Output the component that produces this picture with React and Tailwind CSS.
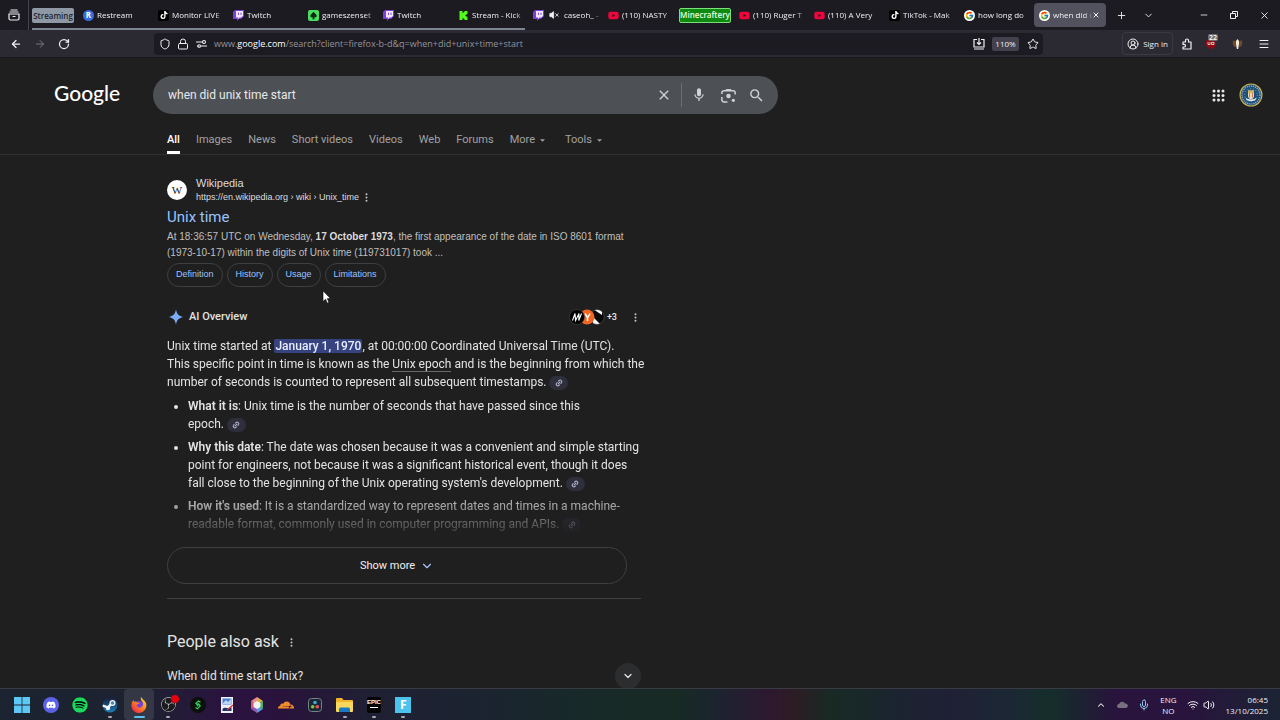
import React from "react";
import { FaTiktok, FaYoutube, FaDiscord, FaSpotify } from "react-icons/fa";
import { SiKick, SiCloudflare, SiObsstudio } from "react-icons/si";
import { FcGoogle } from "react-icons/fc";
import { MdMic, MdSearch, MdClose } from "react-icons/md";
import {
  ArrowLeft, ArrowRight, RotateCw, Shield, Lock, Star, Menu, X, Plus, ChevronDown,
  ChevronUp, Minus, CircleUserRound, Wifi, Volume2, Mic, VolumeX, Link2,
} from "lucide-react";

const chromeFont = "font-['Open_Sans','Noto_Sans',sans-serif]";
const pageFont = "font-[Roboto,'Liberation_Sans',sans-serif]";
const arial = "font-['Liberation_Sans',Arial,sans-serif]";

function TwitchMark() {
  return (
    <svg viewBox="0 0 11 11" className="size-[11px] shrink-0">
      <path d="M2 0h9v6L8 9H6l-2 2V9H0V2z" fill="#7c3fd6" />
      <path d="M3 1h7v5L8.300 7.500H6.500L5 9V7.500H3z" fill="#f0e6ff" />
      <path d="M5.500 2.700v2.300M8 2.700v2.300" stroke="#7c3fd6" strokeWidth="0.900" />
    </svg>
  );
}

function RestreamMark() {
  return (
    <span className="flex size-[11px] shrink-0 items-center justify-center rounded-full bg-[#3a6de0] text-[8px] font-bold leading-none text-white">
      R
    </span>
  );
}

function TiktokMark() {
  return (
    <span className="flex size-[11px] shrink-0 items-center justify-center rounded-xs bg-black text-white">
      <FaTiktok size={8} />
    </span>
  );
}

function SpadeMark() {
  return (
    <svg viewBox="0 0 11 11" className="size-[11px] shrink-0">
      <rect width="11" height="11" rx="2" fill="#4ade60" />
      <path d="M5.500 1.800 8.500 5a1.700 1.700 0 0 1-2.500 2.200l.7 2H4.300l.7-2A1.700 1.700 0 0 1 2.500 5z" fill="#0b2a10" />
    </svg>
  );
}

function GoogleMark() {
  return (
    <span className="flex size-[11px] shrink-0 items-center justify-center rounded-full bg-white">
      <FcGoogle size={9} />
    </span>
  );
}

const YoutubeMark = () => <FaYoutube size={11} className="shrink-0 text-[#f0043c]" />;
const KickMark = () => <SiKick size={9} className="mx-px shrink-0 text-[#53fc18]" />;

const streamTabs = [
  { icon: RestreamMark, title: "Restream" },
  { icon: TiktokMark, title: "Monitor LIVE" },
  { icon: TwitchMark, title: "Twitch" },
  { icon: SpadeMark, title: "gameszenset" },
  { icon: TwitchMark, title: "Twitch" },
  { icon: KickMark, title: "Stream - Kick" },
];
const looseTabs = [
  { icon: TwitchMark, title: "caseoh_ -", muted: true },
  { icon: YoutubeMark, title: "(110) NASTY" },
];
const rightTabs = [
  { icon: YoutubeMark, title: "(110) Ruger T" },
  { icon: YoutubeMark, title: "(110) A Very" },
  { icon: TiktokMark, title: "TikTok - Mak" },
  { icon: GoogleMark, title: "how long do" },
  { icon: GoogleMark, title: "when did u", active: true },
];

function Tab({ icon: Icon, title, muted, active }) {
  return (
    <div
      className={
        active
          ? "flex h-6 w-[72px] shrink-0 items-center rounded-sm bg-[#52525e] pl-[5px] pr-[6px]"
          : "flex h-6 w-[72px] shrink-0 items-center pl-[5px]"
      }
    >
      <button type="button" role="tab" aria-selected={!!active} className="flex min-w-0 flex-1 items-center gap-[3px]">
        <Icon />
        {muted && <VolumeX size={10} className="mx-[2px] shrink-0" fill="currentColor" />}
        <span className="min-w-0 flex-1 whitespace-nowrap text-left [mask-image:linear-gradient(to_right,black_80%,transparent_105%)]">
          {title}
        </span>
      </button>
      {active && (
        <button type="button" aria-label="Close tab" className="shrink-0">
          <X size={8} strokeWidth={3} />
        </button>
      )}
    </div>
  );
}

function TabStrip() {
  return (
    <div className={`flex h-[30px] shrink-0 items-center bg-[#1c1b22] text-[8px] text-[#f0f0f4] ${chromeFont}`}>
      <button type="button" aria-label="Recent browsing" className="flex h-full w-[29px] shrink-0 items-center justify-center border-r border-[#44434c]">
        <svg viewBox="0 0 12 12" className="size-3" fill="none" stroke="currentColor" strokeWidth="1.200">
          <path d="M2.500 1h7M1.500 3h9M1 5h10v4.500a1.500 1.500 0 0 1-1.500 1.500h-7A1.500 1.500 0 0 1 1 9.500zM4.500 7.500h3" />
        </svg>
      </button>
      <div className="ml-[3px] flex h-full items-center gap-[3px] border-b-2 border-[#7d8591] pt-[2px]">
        <button type="button" className="mr-px h-[15px] w-[42px] rounded-xs bg-[#8f99a6] text-center font-semibold leading-[13px] text-[#22242c]">
          Streaming
        </button>
        {streamTabs.map((t, i) => <Tab key={i} {...t} />)}
      </div>
      <div className="ml-[3px] flex items-center gap-[3px]">
        {looseTabs.map((t, i) => <Tab key={i} {...t} />)}
        <button type="button" className="ml-px h-[15px] w-[52px] rounded-xs border border-[#7be07b] bg-[#0f8a10] text-center font-semibold leading-[12px] text-[#e4ffe0]">
          Minecraftery
        </button>
        {rightTabs.map((t, i) => <Tab key={i} {...t} />)}
      </div>
      <button type="button" aria-label="New tab" className="ml-[10px]"><Plus size={11} /></button>
      <button type="button" aria-label="List all tabs" className="ml-4"><ChevronDown size={11} /></button>
      <div className="ml-auto flex items-center gap-5 pr-[10px]">
        <button type="button" aria-label="Minimize"><Minus size={10} /></button>
        <button type="button" aria-label="Restore">
          <svg viewBox="0 0 10 10" className="size-[10px]" fill="none" stroke="currentColor">
            <path d="M1.500 3.500h5v5h-5zM3.500 3V1.500h5v5H7" />
          </svg>
        </button>
        <button type="button" aria-label="Close"><X size={11} /></button>
      </div>
    </div>
  );
}

function Toolbar() {
  return (
    <div className={`flex h-[28px] shrink-0 items-center border-b border-[#18181b] bg-[#2b2a33] text-[9px] text-[#f0f0f4] ${chromeFont}`}>
      <div className="flex w-[154px] shrink-0 items-center gap-[12px] pl-[10px]">
        <button type="button" aria-label="Back"><ArrowLeft size={12} strokeWidth={2.5} /></button>
        <button type="button" aria-label="Forward" className="text-[#77767f]"><ArrowRight size={12} /></button>
        <button type="button" aria-label="Reload"><RotateCw size={12} strokeWidth={2.5} /></button>
      </div>
      <div className="flex h-[22px] min-w-0 flex-1 items-center rounded-sm bg-[#1c1b22] pl-[5px] pr-1">
        <Shield size={12} className="shrink-0" />
        <Lock size={12} className="ml-[6px] shrink-0" />
        <svg viewBox="0 0 11 10" className="ml-[7px] h-[10px] w-[11px] shrink-0" fill="none" stroke="currentColor" strokeWidth="1.100">
          <path d="M0 3h6M5 7h6M1 7h1" />
          <circle cx="8" cy="3" r="1.500" />
          <circle cx="3.200" cy="7" r="1.300" />
        </svg>
        <div className="ml-[7px] flex-1 whitespace-nowrap text-[#94939c]">
          www.<span className="text-white">google.com</span>/search?client=firefox-b-d&amp;q=when+did+unix+time+start
        </div>
        <svg viewBox="0 0 12 12" className="size-3 shrink-0" fill="none" stroke="currentColor" strokeWidth="1.200">
          <path d="M4 1.500H1V9h10V1.500H8M6 0v6M4 4.500l2 2 2-2M1 11h10" />
        </svg>
        <button type="button" className="ml-[7px] h-[14px] w-[27px] rounded-xs bg-[#42414d] text-center text-[8px] leading-[14px]">110%</button>
        <button type="button" aria-label="Bookmark" className="ml-2"><Star size={12} /></button>
      </div>
      <div className="flex w-[237px] shrink-0 items-center">
        <button type="button" className="ml-[79px] flex h-[23px] w-[51px] items-center justify-center gap-1 rounded-sm border border-[#3b3a44] text-[8px] font-medium">
          <CircleUserRound size={12} className="shrink-0" />
          <span className="whitespace-nowrap">Sign in</span>
        </button>
        <button type="button" aria-label="Extensions" className="ml-2">
          <svg viewBox="0 0 12 12" className="size-3" fill="none" stroke="currentColor" strokeWidth="1.200" strokeLinejoin="round">
            <path d="M2 4h2.500V2.500a1.500 1.500 0 0 1 3 0V4H10v7H2V9h1.200a1.300 1.300 0 0 0 0-2.600H2z" />
          </svg>
        </button>
        <button type="button" aria-label="Content blocker" className="relative ml-[13px]">
          <svg viewBox="0 0 10 11" className="h-[11px] w-[10px]">
            <path d="M5 0l5 2v4c0 3-3 4.500-5 5-2-.5-5-2-5-5V2z" fill="#8c0c14" />
            <path d="M2 4v2.500h2V4M5.500 4.500h2.500v2H5.500z" fill="none" stroke="#fff" strokeWidth=".7" />
          </svg>
          <span className="absolute -top-[4px] left-[2px] rounded-xs bg-[#6c7074] px-px text-[7px] font-semibold leading-[7px] text-white">22</span>
        </button>
        <button type="button" aria-label="Extension" className="ml-4">
          <svg viewBox="0 0 11 10" className="h-[10px] w-[11px]">
            <path d="M1 2c2-1 3 0 3 2v4C2 8 0 6 1 2zM10 2C8 1 7 2 7 4v4c2 0 4-2 3-6z" fill="#6e4a2a" />
            <path d="M4 2l1.500-2L7 2v3l-.8 5H4.800L4 5z" fill="#f3ead8" />
          </svg>
        </button>
        <button type="button" aria-label="Menu" className="ml-[15px]"><Menu size={12} /></button>
      </div>
    </div>
  );
}

const Dots = ({ label }) => (
  <button type="button" aria-label={label} className="flex h-3 w-2 items-center justify-center text-[#c4c4c4]">
    <svg viewBox="0 0 3 9" className="h-[9px] w-[3px]" fill="currentColor">
      <circle cx="1.500" cy="1.200" r="1" /><circle cx="1.500" cy="4.500" r="1" /><circle cx="1.500" cy="7.800" r="1" />
    </svg>
  </button>
);

function SealAvatar() {
  return (
    <svg viewBox="0 0 24 24" className="size-6">
      <circle cx="12" cy="12" r="11.500" fill="#c9b458" />
      <circle cx="12" cy="12" r="10.400" fill="#23527c" />
      <circle cx="12" cy="12" r="9" fill="none" stroke="#9db4bd" strokeWidth="1.200" strokeDasharray="1.200 .9" />
      <circle cx="12" cy="12" r="7.600" fill="#1b4f78" />
      <circle cx="12" cy="12" r="6.300" fill="none" stroke="#7fa7a8" strokeDasharray="1 1.800" />
      <path d="M9 7.500h6V13c0 2-1.500 3-3 3.500-1.500-.5-3-1.500-3-3.500z" fill="#e8d9b8" />
      <path d="M9 7.500h6v2.500H9z" fill="#d8b25a" />
      <path d="M10.500 10v4.500M13.500 10v4.500" stroke="#cf6a4a" strokeWidth=".9" />
      <path d="M6.500 14.500c2 2.500 9 2.500 11 0l-1 2.500c-2 1.500-7 1.500-9 0z" fill="#e4edf0" />
    </svg>
  );
}

function SearchHeader() {
  return (
    <header className="flex items-center pt-[18px]">
      <a href="#" className="ml-[54px] w-[99px] shrink-0 pb-[5px] font-[Lato,sans-serif] text-[21px] font-medium leading-6 text-white">Google</a>
      <form className="flex h-[38px] w-[625px] items-center rounded-full bg-[#4d5156] pl-[15px] pr-[13px] text-[#d0d3d6]">
        <input
          aria-label="Search"
          defaultValue="when did unix time start"
          className="min-w-0 flex-1 bg-transparent text-[12px] text-[#e8e8e8] outline-none"
        />
        <button type="button" aria-label="Clear" className="mr-[9px]"><MdClose size={16} /></button>
        <span className="h-6 w-px bg-[#6b6f74]" />
        <button type="button" aria-label="Search by voice" className="ml-[9px]"><MdMic size={16} /></button>
        <button type="button" aria-label="Search by image" className="ml-[14px]">
          <svg viewBox="0 0 14 14" className="size-[15px]" fill="none" stroke="currentColor" strokeWidth="1.400">
            <path d="M.8 5.500V4.500a2 2 0 0 1 2-2h8.400a2 2 0 0 1 2 2v1.500M.8 8.500v2.500a2 2 0 0 0 2 2H6" />
            <path d="M4.500 2.500V1h5v1.500z" fill="currentColor" stroke="none" />
            <circle cx="7" cy="7.500" r="2.100" fill="currentColor" stroke="none" />
            <circle cx="11.500" cy="11.500" r="1.500" fill="currentColor" stroke="none" />
          </svg>
        </button>
        <button type="submit" aria-label="Search" className="ml-3"><MdSearch size={17} /></button>
      </form>
      <div className="ml-auto flex items-center gap-[14px] pr-[17px]">
        <button type="button" aria-label="Google apps">
          <svg viewBox="0 0 13 13" className="size-[13px]" fill="#e8e8e8">
            {[2, 6.5, 11].map((y) => [2, 6.5, 11].map((x) => <circle key={`${x}-${y}`} cx={x} cy={y} r="1.500" />))}
          </svg>
        </button>
        <button type="button" aria-label="Account"><SealAvatar /></button>
      </div>
    </header>
  );
}

const filters = ["All", "Images", "News", "Short videos", "Videos", "Web", "Forums"];

function FilterNav() {
  return (
    <nav className="flex h-[41px] items-end gap-4 border-b border-[#303133] pl-[167px] text-[11px] leading-4 text-[#a2a2a2]">
      {filters.map((f, i) => (
        <a
          key={f}
          href="#"
          className={i === 0 ? "border-b-3 border-white pb-[3px] font-medium text-white" : "border-b-3 border-transparent pb-[3px]"}
        >
          {f}
        </a>
      ))}
      {["More", "Tools"].map((f) => (
        <button key={f} type="button" className="mr-1 flex items-center gap-[5px] border-b-3 border-transparent pb-[3px]">
          {f}
          <svg viewBox="0 0 6 3" className="h-[3px] w-[5px]" fill="currentColor"><path d="M0 0h6L3 3z" /></svg>
        </button>
      ))}
    </nav>
  );
}

const LinkPill = () => (
  <button type="button" aria-label="Sources" className="inline-flex h-[14px] w-[19px] items-center justify-center rounded-full bg-[#2e2e3c] align-middle text-[#b9bbd0]">
    <Link2 size={8} strokeWidth={3} className="-rotate-45" />
  </button>
);

function WikiResult() {
  return (
    <article className={arial}>
      <div className="flex items-center">
        <span className="flex size-5 items-center justify-center rounded-full bg-white font-['Liberation_Serif',serif] text-[11px] leading-none text-[#222]">W</span>
        <div className="ml-[9px] text-[#dadce0]">
          <div className="text-[11px] leading-[14px]">Wikipedia</div>
          <div className="flex items-center gap-[3px] text-[9px] leading-[14px]">
            <span>https://en.wikipedia.org › wiki › Unix_time</span>
            <Dots label="About this result" />
          </div>
        </div>
      </div>
      <h3 className={`mt-[3px] text-[15px] leading-5 text-[#99c3ff] ${pageFont}`}><a href="#">Unix time</a></h3>
      <p className="mt-[2px] whitespace-nowrap text-[10px] leading-4 text-[#bfbfbf]">
        At 18:36:57 UTC on Wednesday, <b className="text-[#dcdcdc]">17 October 1973</b>, the first appearance of the date in ISO 8601 format<br />
        (1973-10-17) within the digits of Unix time (119731017) took ...
      </p>
      <div className="mt-[2px] flex gap-1 text-[9px] text-[#99c3ff]">
        {["Definition", "History", "Usage", "Limitations"].map((c) => (
          <a key={c} href="#" className="flex h-6 items-center rounded-full border border-[#3c4043] px-2">{c}</a>
        ))}
      </div>
    </article>
  );
}

function SourceBadges() {
  return (
    <div className="flex items-center gap-[2px] text-[9px] font-medium text-[#e8e8e8]">
      <svg viewBox="0 0 36 16" className="h-4 w-9">
        <clipPath id="stripe"><circle cx="28" cy="8" r="7.300" /></clipPath>
        <g clipPath="url(#stripe)">
          <path d="M20 0h16v16H20z" fill="#0a0a0a" />
          <path d="M24 0h9v6zM24 8l8 8h-8z" fill="#fff" />
          <path d="M33 0v11l3 3V0z" fill="#0a0a0a" />
        </g>
        <circle cx="28" cy="8" r="7.300" fill="none" stroke="#6a6a6a" strokeWidth=".5" />
        <circle cx="18" cy="8" r="7.500" fill="#f26522" />
        <path d="M16 4.500l2.500 4v3.500M21 4.500l-2.500 4.500" fill="none" stroke="#fff" strokeWidth="1.500" />
        <circle cx="8" cy="8" r="7.500" fill="#000" stroke="#4a4a4a" strokeWidth=".6" />
        <path d="M3.500 11.500 6 4.500l.6 7L10 4.500l-.2 7L12.500 4.500" fill="none" stroke="#fff" strokeWidth="1.100" />
      </svg>
      <span>+3</span>
    </div>
  );
}

function AiOverview() {
  return (
    <section className="mt-5 text-[12px] leading-[18px] text-[#e3e3e3]">
      <div className="flex h-5 items-center">
        <svg viewBox="0 0 16 16" className="ml-px size-4"><path d="M8 .5C8.800 5 11 7.200 15.500 8 11 8.800 8.800 11 8 15.500 7.200 11 5 8.800.5 8 5 7.200 7.200 5 8 .5z" fill="#7cacf8" /></svg>
        <h2 className="ml-[5px] text-[11px] font-medium">AI Overview</h2>
        <div className="ml-auto flex items-center gap-[14px] pr-[2px]">
          <SourceBadges />
          <Dots label="More options" />
        </div>
      </div>
      <div className="-mr-5 whitespace-nowrap [mask-image:linear-gradient(to_bottom,black_78%,transparent_104%)]">
        <p className="mt-[10px]">
          Unix time started at <mark className="rounded-xs bg-[#36437f] px-px font-medium text-[#e8ecff]">January 1, 1970</mark>, at 00:00:00 Coordinated Universal Time (UTC).<br />
          This specific point in time is known as the <a href="#" className="border-b border-[#6a6a6a]">Unix epoch</a> and is the beginning from which the<br />
          number of seconds is counted to represent all subsequent timestamps. <LinkPill />
        </p>
        <ul className="mt-[6px] flex list-disc flex-col gap-[5px] pl-[21px]">
          <li>
            <b className="font-semibold">What it is</b>: Unix time is the number of seconds that have passed since this<br />
            epoch. <LinkPill />
          </li>
          <li>
            <b className="font-semibold">Why this date</b>: The date was chosen because it was a convenient and simple starting<br />
            point for engineers, not because it was a significant historical event, though it does<br />
            fall close to the beginning of the Unix operating system's development. <LinkPill />
          </li>
          <li>
            <b className="font-semibold">How it's used</b>: It is a standardized way to represent dates and times in a machine-<br />
            readable format, commonly used in computer programming and APIs. <LinkPill />
          </li>
        </ul>
      </div>
      <button type="button" className="mt-[14px] flex h-[37px] w-[460px] items-center justify-center gap-[5px] rounded-full border border-[#3c4043] text-[11px] text-[#f0f0f0]">
        Show more <ChevronDown size={14} className="text-[#a8c7fa]" />
      </button>
    </section>
  );
}

function PeopleAlsoAsk() {
  return (
    <section className="mt-[14px] border-t border-[#3c4043] pt-[31px] text-[#e3e3e3]">
      <div className="flex items-center gap-[9px]">
        <h2 className="text-[16px] leading-6">People also ask</h2>
        <Dots label="About this section" />
      </div>
      <div className="mt-[9px] flex items-center justify-between text-[12px]">
        <span>When did time start Unix?</span>
        <button type="button" aria-label="Expand" className="flex size-[26px] items-center justify-center rounded-full bg-[#2c2d2f]">
          <ChevronDown size={12} strokeWidth={2.5} />
        </button>
      </div>
    </section>
  );
}

const taskIcons = [
  { name: "Start", el: (
    <svg viewBox="0 0 16 16" className="size-4" fill="#5cc8f5"><path d="M0 0h7.600v7.600H0zM8.400 0H16v7.600H8.400zM0 8.400h7.600V16H0zM8.400 8.400H16V16H8.400z" /></svg>
  ) },
  { name: "Discord", el: <span className="flex size-4 items-center justify-center rounded-full bg-[#5b62e8] text-white"><FaDiscord size={10} /></span> },
  { name: "Spotify", el: <span className="rounded-full bg-black text-[#1ed760]"><FaSpotify size={16} /></span> },
  { name: "Steam", dot: true, el: (
    <svg viewBox="0 0 16 16" className="size-4">
      <defs><linearGradient id="steam" x1="0" y1="0" x2="0" y2="1"><stop offset="0" stopColor="#16203a" /><stop offset="1" stopColor="#1f7db8" /></linearGradient></defs>
      <circle cx="8" cy="8" r="7.500" fill="url(#steam)" />
      <path d="M.8 8.500 6 10.500l3-3.500" fill="none" stroke="#f2f6fa" strokeWidth="2.400" />
      <circle cx="6" cy="11" r="2.200" fill="#f2f6fa" />
      <circle cx="10.500" cy="6" r="2.400" fill="#4a86b0" stroke="#f2f6fa" strokeWidth="1.300" />
    </svg>
  ) },
  { name: "Firefox", active: true, el: (
    <svg viewBox="0 0 16 16" className="size-4">
      <defs><linearGradient id="fx" x1="1" y1="0" x2=".2" y2="1"><stop offset="0" stopColor="#ffe34a" /><stop offset=".5" stopColor="#ff8a1f" /><stop offset="1" stopColor="#f0264d" /></linearGradient></defs>
      <circle cx="8" cy="9" r="5" fill="#7540d8" />
      <path d="M10 0c1 2 3.500 3 5 6 1.500 5-2 10-7 10S-.5 11.500.7 6.500C1 5 1.500 4 2.500 3l.5 2c1.500-1 3 0 3.500.8 1-.2 2 .3 2.500.7-1.500 0-2 1-3.500 1.200.5 2 2 3.300 4 2.800 3-1 3-4 2-5.500C10 4 9.500 1.500 10 0z" fill="url(#fx)" />
    </svg>
  ) },
  { name: "OBS Studio", dot: true, el: (
    <span className="relative"><SiObsstudio size={15} className="rounded-full bg-[#1b1b1f] text-[#c9c9cf]" /><span className="absolute -right-[3px] -top-[2px] size-2 rounded-full bg-[#e3000f]" /></span>
  ) },
  { name: "Streaming app", el: (
    <svg viewBox="0 0 16 16" className="size-4"><circle cx="8" cy="8" r="8" fill="#0c0f0d" /><path d="M10.500 5.200 8.500 4 6 6.200l4.200 2.600L7.500 11.800 5.500 10.500M6 6.200 8 9.500M8.200 6.500l2 2.300" fill="none" stroke="#2fd158" strokeWidth="1.200" /></svg>
  ) },
  { name: "Paint", el: (
    <svg viewBox="0 0 14 16" className="h-4 w-[14px]"><path d="M1 0h12v16H1z" fill="#eef2f8" /><path d="M2.500 1.500h9v6h-9z" fill="#4a7fd0" /><path d="M3 6l3-3 2 2 3-3v5H3z" fill="#bcd6f5" /><path d="M2.500 12c3-3 6 1 9-2v4h-9z" fill="#22355e" /><path d="M13 8l-6 5" stroke="#d33" strokeWidth="1.200" /></svg>
  ) },
  { name: "Color picker", el: (
    <svg viewBox="0 0 16 16" className="size-4"><path d="M8 0l6 4-6 4z" fill="#d9b23c" /><path d="M14 4v8L8 8z" fill="#4caf6a" /><path d="M14 12l-6 4V8z" fill="#54a0d8" /><path d="M8 16l-6-4 6-4z" fill="#8e5bb5" /><path d="M2 12V4l6 4z" fill="#d65a78" /><path d="M2 4l6-4v8z" fill="#e88d8d" /><path d="M8 4l3.500 2v4L8 12l-3.500-2V6z" fill="#f2f2ee" /></svg>
  ) },
  { name: "Cloudflare", el: <SiCloudflare size={16} className="text-[#f08a2c]" /> },
  { name: "DaVinci Resolve", el: (
    <svg viewBox="0 0 14 14" className="size-[14px]"><rect x=".5" y=".5" width="13" height="13" rx="3" fill="#1b2630" stroke="#76828c" /><circle cx="7" cy="4.500" r="1.800" fill="#4aa3d8" /><circle cx="4.700" cy="8.700" r="1.800" fill="#7ac943" /><circle cx="9.300" cy="8.700" r="1.800" fill="#e8506a" /></svg>
  ) },
  { name: "File Explorer", dot: true, el: (
    <svg viewBox="0 0 17 16" className="h-4 w-[17px]"><path d="M0 2a1 1 0 0 1 1-1h5l1.500 2H16a1 1 0 0 1 1 1v10H0z" fill="#f5b52a" /><path d="M0 5h17v9a1 1 0 0 1-1 1H1a1 1 0 0 1-1-1z" fill="#fbd75b" /><path d="M3 15v-3a1.500 1.500 0 0 1 1.500-1.500h8A1.500 1.500 0 0 1 14 12v3z" fill="#1a78c8" /></svg>
  ) },
  { name: "Epic Games", dot: true, el: (
    <span className="flex h-4 w-[14px] flex-col items-center rounded-xs bg-[#050505] pt-[2px] font-['Liberation_Sans_Narrow','Liberation_Sans',sans-serif] text-[6px] font-bold leading-[7px] text-white">EPIC<span className="mt-px h-px w-2 bg-white" /></span>
  ) },
  { name: "Fortnite", dot: true, el: (
    <span className="flex size-4 items-center justify-center bg-[#4cc3ee] text-[12px] font-bold leading-none text-white">F</span>
  ) },
];

function Taskbar() {
  return (
    <footer className={`flex h-8 shrink-0 items-center border-t border-[#3a3a42] bg-[linear-gradient(to_right,#1b2430,#1d2230_11%,#2b1240_18%,#29133c_22%,#1f2033_29%,#1b2430_38%,#172a28_46%,#182a24_53%,#1c2430_56%,#2d1830_60%,#2d1c24_62%,#182a24_65%,#1b2430_70%,#202035_74%,#1b2834_79%,#152e2a_82%,#1b2430_84%,#28143c_87%,#28143c_93%,#1b2434)] text-[8px] leading-[11px] text-[#f0f0f4] ${chromeFont}`}>
      <div className="ml-[7px] grid h-full w-[411px] grid-cols-14">
        {taskIcons.map(({ name, el, dot, active }) => (
          <button
            key={name}
            type="button"
            aria-label={name}
            className={active ? "relative flex items-center justify-center rounded-sm bg-white/10" : "relative flex items-center justify-center"}
          >
            {el}
            {dot && <span className="absolute bottom-[2px] h-[2px] w-1 rounded-full bg-[#a8a8b2]" />}
            {active && <span className="absolute bottom-[2px] h-[2px] w-[11px] rounded-full bg-[#5cc0ee]" />}
          </button>
        ))}
      </div>
      <div className="ml-auto flex items-center pr-3">
        <ChevronUp size={10} strokeWidth={2.5} />
        <svg viewBox="0 0 11 7" className="ml-[11px] h-[7px] w-[11px]" fill="#77707f"><path d="M2 7a2 2 0 0 1 0-4 3.300 3.300 0 0 1 6-.5A2.300 2.300 0 0 1 9 7z" /></svg>
        <Mic size={12} className="ml-[10px] text-[#8cc4ea]" />
        <div className="ml-[10px] text-center">ENG<br />NO</div>
        <Wifi size={12} className="ml-[10px]" />
        <Volume2 size={12} className="ml-1" />
        <div className="ml-[11px] text-right">06:45<br />13/10/2025</div>
      </div>
    </footer>
  );
}

export default function App() {
  return (
    <div className={`relative flex h-screen flex-col overflow-hidden bg-[#1f1f1f] ${pageFont}`}>
      <TabStrip />
      <Toolbar />
      <div className="min-h-0 flex-1 overflow-hidden">
        <SearchHeader />
        <FilterNav />
        <main className="ml-[167px] w-[474px] pt-[21px]">
          <WikiResult />
          <AiOverview />
          <PeopleAlsoAsk />
        </main>
      </div>
      <Taskbar />
      <svg viewBox="0 0 9 14" className="pointer-events-none absolute left-[322px] top-[290px] h-[14px] w-[9px]">
        <path d="M1 .8v10.700l2.600-2.300 1.700 4 1.700-.8-1.700-3.800 3.200-.1z" fill="#fff" stroke="#000" strokeWidth=".6" />
      </svg>
    </div>
  );
}
